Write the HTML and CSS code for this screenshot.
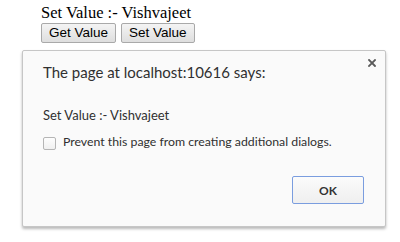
FILE: index.html
```html
<!DOCTYPE html>
<html>
<head>
<meta charset="utf-8">
<link rel="stylesheet" href="styles.css">
</head>
<body>
<div class="page">
  <div class="result">Set Value :- Vishvajeet</div>
  <div class="actions">
    <button class="btn">Get Value</button>
    <button class="btn">Set Value</button>
  </div>
</div>
<div class="dialog">
  <span class="close"><svg width="8" height="8" viewBox="0 0 8 8"><path d="M1 1L7 7M7 1L1 7" stroke="#5a5a5a" stroke-width="1.8" stroke-linecap="square"/></svg></span>
  <div class="title">The page at localhost:10616 says:</div>
  <div class="message">Set Value :- Vishvajeet</div>
  <label class="prevent"><span class="check"></span><span>Prevent this page from creating additional dialogs.</span></label>
  <div class="footer"><button class="ok">OK</button></div>
</div>
</body>
</html>
```

FILE: styles.css
```css
html, body {
  margin: 0;
  padding: 0;
  background: #ffffff;
}
body {
  width: 400px;
  height: 242px;
  overflow: hidden;
  position: relative;
}
.page {
  padding: 4px 0 0 41px;
}
.result {
  font-family: "Liberation Serif", "Times New Roman", serif;
  font-size: 16.5px;
  line-height: 18px;
  color: #000;
}
.actions {
  display: flex;
  gap: 5px;
  margin-top: 1px;
}
.btn {
  font-family: "Liberation Sans", Arial, sans-serif;
  font-size: 13.5px;
  height: 20px;
  padding: 0 7px;
  margin: 0;
  border: 1px solid #a9a9a9;
  border-radius: 2px;
  background: linear-gradient(#f4f4f4, #dedede);
  color: #000;
  line-height: 18px;
}
.dialog {
  position: absolute;
  left: 22px;
  top: 50px;
  width: 321px;
  padding: 11px 21px 22px 20px;
  background: #fafafa;
  border: 1px solid #c6c6c6;
  border-radius: 2px;
  box-shadow: 0 2px 3px rgba(0,0,0,0.28);
  font-family: Lato, "Noto Sans", sans-serif;
  color: #333;
}
.close {
  position: absolute;
  right: 9px;
  top: 8px;
  width: 8px;
  height: 8px;
  display: block;
}
.close svg { display: block; }
.title {
  font-size: 15px;
  line-height: 20px;
  color: #303030;
}
.message {
  margin-top: 25px;
  font-size: 13px;
  line-height: 16px;
  color: #303030;
}
.prevent {
  display: flex;
  align-items: flex-start;
  gap: 7px;
  margin-top: 11px;
  font-size: 12.3px;
  line-height: 16px;
  color: #303030;
}
.check {
  box-sizing: border-box;
  width: 13px;
  height: 13px;
  margin-top: 3px;
  border: 1px solid #b5b5b5;
  border-radius: 2px;
  background: linear-gradient(#fdfdfd, #f0f0f0);
  flex: none;
}
.footer {
  display: flex;
  justify-content: flex-end;
  margin-top: 26px;
}
.ok {
  width: 72px;
  height: 28px;
  margin: 0;
  padding: 0;
  border: 1px solid #7a9ddf;
  border-radius: 2px;
  background: linear-gradient(#fbfbfb, #efefef);
  font-family: Lato, "Noto Sans", sans-serif;
  font-weight: bold;
  font-size: 12px;
  color: #333;
}
```
